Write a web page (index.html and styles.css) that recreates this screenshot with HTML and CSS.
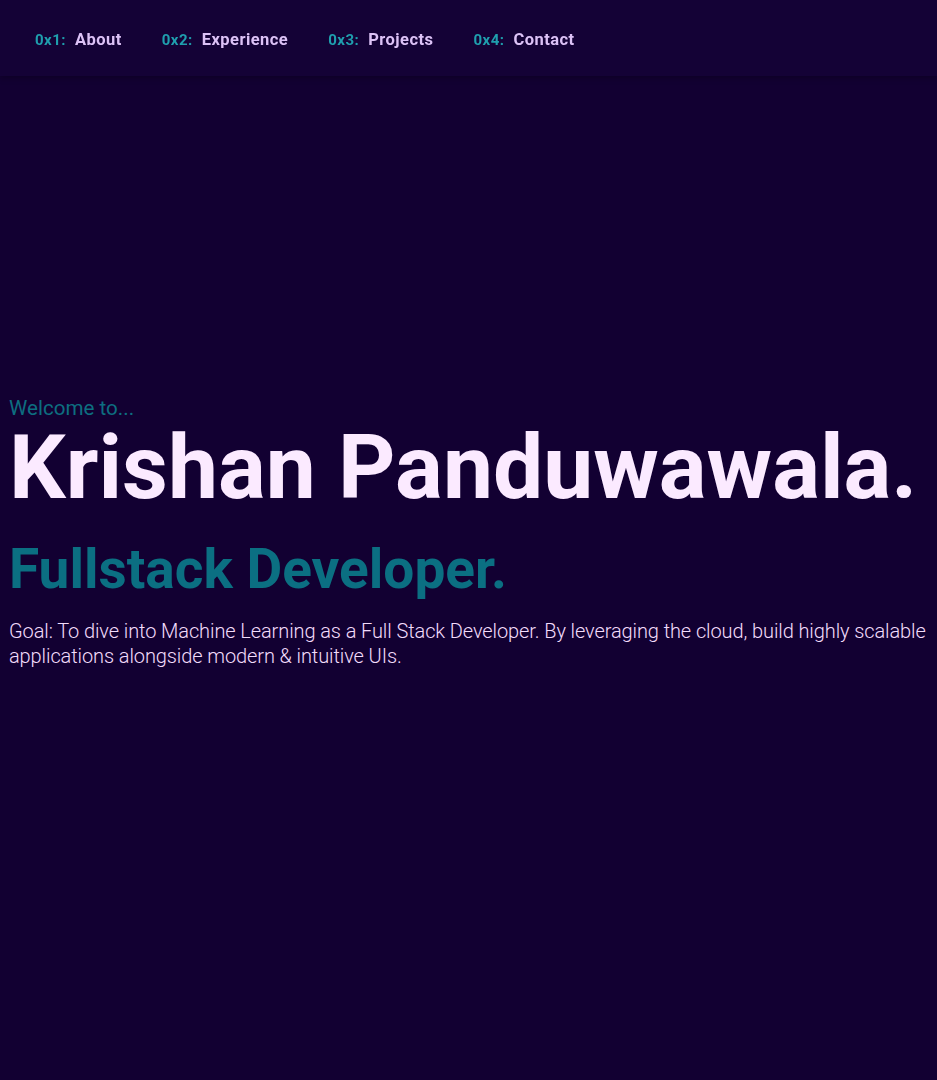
FILE: index.html
```html
<!DOCTYPE html>
<html lang="en">
<head>
<meta charset="utf-8">
<title>Krishan Panduwawala</title>
<link rel="stylesheet" href="styles.css">
</head>
<body>
<nav class="nav">
  <ul class="nav-list">
    <li class="nav-item"><span class="nav-num">0x1:</span><span class="nav-label">About</span></li>
    <li class="nav-item"><span class="nav-num">0x2:</span><span class="nav-label">Experience</span></li>
    <li class="nav-item"><span class="nav-num">0x3:</span><span class="nav-label">Projects</span></li>
    <li class="nav-item"><span class="nav-num">0x4:</span><span class="nav-label">Contact</span></li>
  </ul>
</nav>
<main class="hero">
  <p class="welcome">Welcome to...</p>
  <h1 class="name">Krishan Panduwawala.</h1>
  <h2 class="role">Fullstack Developer.</h2>
  <p class="goal">Goal: To dive into Machine Learning as a Full Stack Developer. By leveraging the cloud, build highly scalable applications alongside modern &amp; intuitive UIs.</p>
</main>
</body>
</html>
```
FILE: styles.css
```css
* { box-sizing: border-box; }
html, body { margin: 0; padding: 0; }
body {
  background: #120032;
  font-family: Roboto, "Liberation Sans", sans-serif;
  color: #fbeaff;
  height: 1080px;
  overflow: hidden;
}
.nav {
  position: fixed;
  top: 0;
  left: 0;
  right: 0;
  height: 76px;
  background: #140236;
  box-shadow: 0 2px 6px rgba(0,0,0,0.25);
  display: flex;
  align-items: center;
  padding-left: 35px;
  padding-top: 2px;
}
.nav-list {
  list-style: none;
  margin: 0;
  padding: 0;
  display: flex;
  gap: 40px;
}
.nav-item {
  display: flex;
  align-items: baseline;
}
.nav-num {
  width: 40px;
  font-size: 15px;
  font-weight: 700;
  color: #1f9fae;
  letter-spacing: 0.5px;
}
.nav-label {
  font-size: 16.5px;
  font-weight: 700;
  color: #dcc2f6;
  letter-spacing: 0.45px;
}
.hero {
  height: 1080px;
  display: flex;
  flex-direction: column;
  justify-content: center;
  padding: 0 9px 15px;
}
.welcome {
  margin: 0;
  font-size: 20.6px;
  font-weight: 400;
  color: #0d6e80;
  line-height: 24px;
}
.name {
  margin: 0;
  font-size: 89.3px;
  font-weight: 700;
  color: #fbeaff;
  line-height: 95px;
  white-space: nowrap;
}
.role {
  margin: 21px 0 0;
  font-size: 55px;
  font-weight: 700;
  color: #0b6f82;
  line-height: 66px;
}
.goal {
  margin: 17px 0 0;
  font-size: 20px;
  font-weight: 300;
  color: #f2dcfb;
  line-height: 25px;
  letter-spacing: -0.1px;
}
```
